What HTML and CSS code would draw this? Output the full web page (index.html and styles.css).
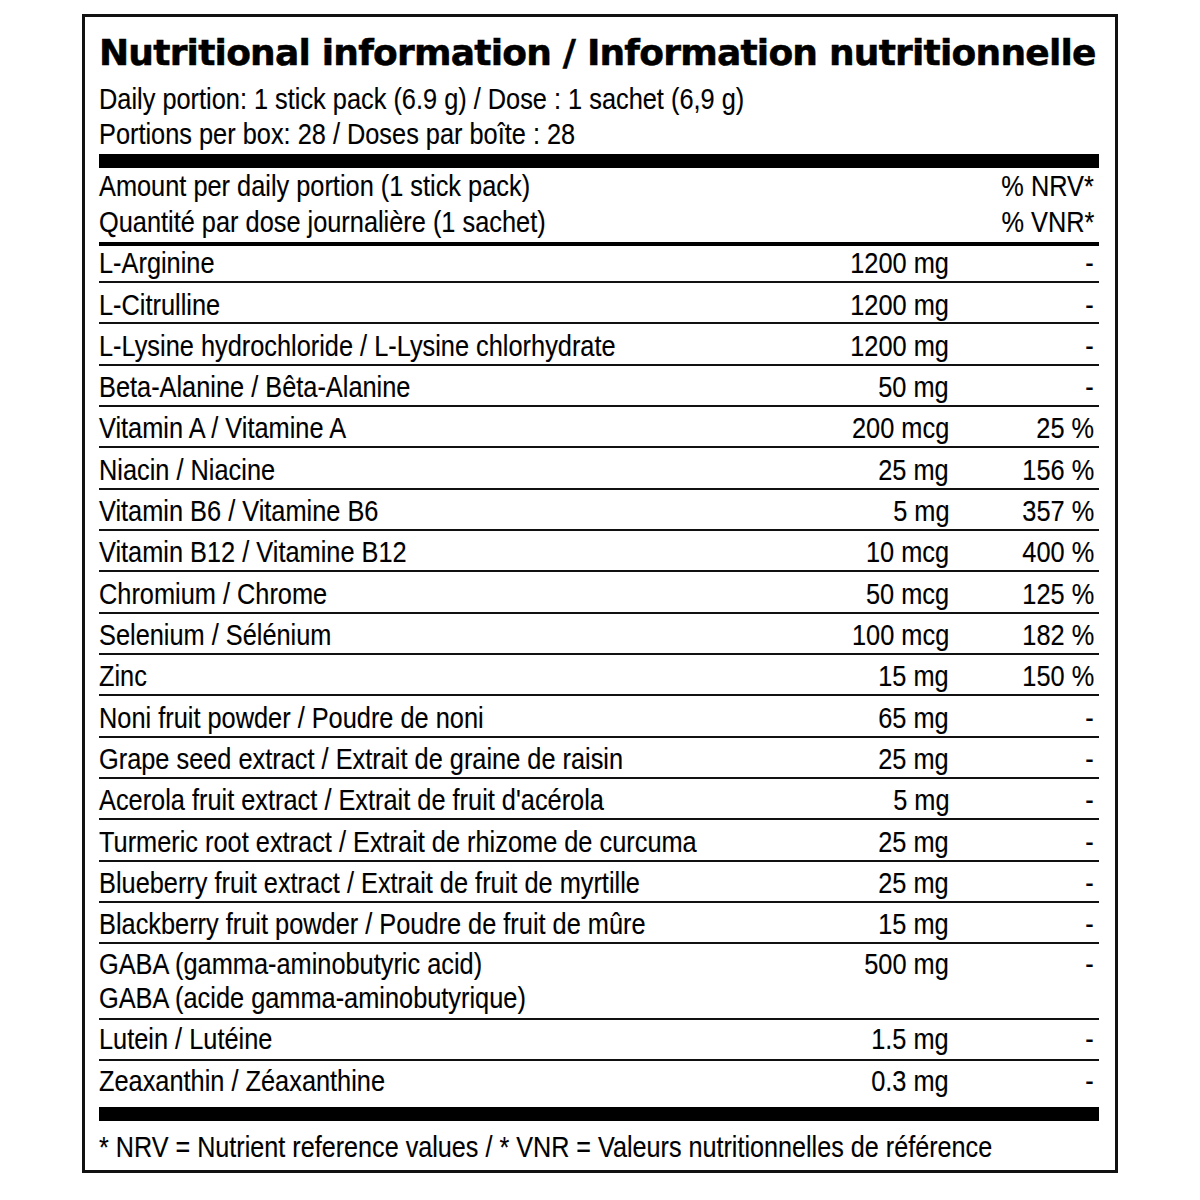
FILE: index.html
```html
<!DOCTYPE html>
<html lang="en">
<head>
<meta charset="utf-8">
<title>Nutritional information</title>
<link rel="stylesheet" href="styles.css">
</head>
<body>
<div class="label">
  <h1 class="title">Nutritional information / Information nutritionnelle</h1>
  <div class="serving">
    <div><span class="c">Daily portion: 1 stick pack (6.9 g) / Dose : 1 sachet (6,9 g)</span></div>
    <div><span class="c">Portions per box: 28 / Doses par boîte : 28</span></div>
  </div>
  <div class="bar"></div>
  <div class="head">
    <div class="head-line"><span class="c">Amount per daily portion (1 stick pack)</span><span class="c r">% NRV*</span></div>
    <div class="head-line"><span class="c">Quantité par dose journalière (1 sachet)</span><span class="c r">% VNR*</span></div>
  </div>
  <div class="rows">
    <div class="row first"><span class="name"><span class="c">L-Arginine</span></span><span class="amt"><span class="c r">1200 mg</span></span><span class="nrv"><span class="c r">-</span></span></div>
    <div class="row"><span class="name"><span class="c">L-Citrulline</span></span><span class="amt"><span class="c r">1200 mg</span></span><span class="nrv"><span class="c r">-</span></span></div>
    <div class="row"><span class="name"><span class="c">L-Lysine hydrochloride / L-Lysine chlorhydrate</span></span><span class="amt"><span class="c r">1200 mg</span></span><span class="nrv"><span class="c r">-</span></span></div>
    <div class="row"><span class="name"><span class="c">Beta-Alanine / Bêta-Alanine</span></span><span class="amt"><span class="c r">50 mg</span></span><span class="nrv"><span class="c r">-</span></span></div>
    <div class="row"><span class="name"><span class="c">Vitamin A / Vitamine A</span></span><span class="amt"><span class="c r">200 mcg</span></span><span class="nrv"><span class="c r">25 %</span></span></div>
    <div class="row"><span class="name"><span class="c">Niacin / Niacine</span></span><span class="amt"><span class="c r">25 mg</span></span><span class="nrv"><span class="c r">156 %</span></span></div>
    <div class="row"><span class="name"><span class="c">Vitamin B6 / Vitamine B6</span></span><span class="amt"><span class="c r">5 mg</span></span><span class="nrv"><span class="c r">357 %</span></span></div>
    <div class="row"><span class="name"><span class="c">Vitamin B12 / Vitamine B12</span></span><span class="amt"><span class="c r">10 mcg</span></span><span class="nrv"><span class="c r">400 %</span></span></div>
    <div class="row"><span class="name"><span class="c">Chromium / Chrome</span></span><span class="amt"><span class="c r">50 mcg</span></span><span class="nrv"><span class="c r">125 %</span></span></div>
    <div class="row"><span class="name"><span class="c">Selenium / Sélénium</span></span><span class="amt"><span class="c r">100 mcg</span></span><span class="nrv"><span class="c r">182 %</span></span></div>
    <div class="row"><span class="name"><span class="c">Zinc</span></span><span class="amt"><span class="c r">15 mg</span></span><span class="nrv"><span class="c r">150 %</span></span></div>
    <div class="row"><span class="name"><span class="c">Noni fruit powder / Poudre de noni</span></span><span class="amt"><span class="c r">65 mg</span></span><span class="nrv"><span class="c r">-</span></span></div>
    <div class="row"><span class="name"><span class="c">Grape seed extract / Extrait de graine de raisin</span></span><span class="amt"><span class="c r">25 mg</span></span><span class="nrv"><span class="c r">-</span></span></div>
    <div class="row"><span class="name"><span class="c">Acerola fruit extract / Extrait de fruit d'acérola</span></span><span class="amt"><span class="c r">5 mg</span></span><span class="nrv"><span class="c r">-</span></span></div>
    <div class="row"><span class="name"><span class="c">Turmeric root extract / Extrait de rhizome de curcuma</span></span><span class="amt"><span class="c r">25 mg</span></span><span class="nrv"><span class="c r">-</span></span></div>
    <div class="row"><span class="name"><span class="c">Blueberry fruit extract / Extrait de fruit de myrtille</span></span><span class="amt"><span class="c r">25 mg</span></span><span class="nrv"><span class="c r">-</span></span></div>
    <div class="row"><span class="name"><span class="c">Blackberry fruit powder / Poudre de fruit de mûre</span></span><span class="amt"><span class="c r">15 mg</span></span><span class="nrv"><span class="c r">-</span></span></div>
    <div class="row gaba"><span class="name"><span class="c">GABA (gamma-aminobutyric acid)<br>GABA (acide gamma-aminobutyrique)</span></span><span class="amt"><span class="c r">500 mg</span></span><span class="nrv"><span class="c r">-</span></span></div>
    <div class="row lutein"><span class="name"><span class="c">Lutein / Lutéine</span></span><span class="amt"><span class="c r">1.5 mg</span></span><span class="nrv"><span class="c r">-</span></span></div>
    <div class="row last"><span class="name"><span class="c">Zeaxanthin / Zéaxanthine</span></span><span class="amt"><span class="c r">0.3 mg</span></span><span class="nrv"><span class="c r">-</span></span></div>
  </div>
  <div class="bar"></div>
  <div class="foot"><span class="c">* NRV = Nutrient reference values / * VNR = Valeurs nutritionnelles de référence</span></div>
</div>
</body>
</html>
```

FILE: styles.css
```css
* { box-sizing: border-box; }
html, body { margin: 0; padding: 0; background: #fff; }
body {
  color: #000;
  font-family: "Liberation Sans", Arial, sans-serif;
  font-size: 29px;
}
.c {
  display: inline-block;
  white-space: nowrap;
  transform: scaleX(0.874);
  transform-origin: left center;
  -webkit-text-stroke: 0.15px #000;
}
.c.r { transform-origin: right center; }
.foot .c { transform: scaleX(0.868); }
.label {
  margin: 14px 0 0 82px;
  width: 1036px;
  border: 3px solid #111;
  padding: 14px 16px 6px 14px;
}
.title {
  margin: 0;
  font-family: "DejaVu Sans", "Liberation Sans", sans-serif;
  font-weight: bold;
  font-size: 36px;
  line-height: 44px;
  letter-spacing: -0.78px;
  white-space: nowrap;
  -webkit-text-stroke: 0.5px #000;
}
.serving {
  margin-top: 7px;
  line-height: 35px;
}
.bar {
  height: 14px;
  background: #000;
  margin-top: 2px;
}
.head {
  line-height: 36px;
  padding: 0 5px 2px 0;
  border-bottom: 4px solid #000;
}
.head-line {
  display: flex;
  justify-content: space-between;
}
.row {
  display: grid;
  grid-template-columns: 1fr 150px 145px;
  padding: 5.5px 5px 0 0;
  height: 41.33px;
  line-height: 33px;
  border-bottom: 2px solid #111;
}
.row .amt, .row .nrv { text-align: right; }
.row.first { height: 37px; padding-top: 1.3px; }
.row.gaba { height: 76px; padding-top: 4px; line-height: 33.3px; }
.row.lutein { height: 41px; padding-top: 2.5px; }
.row.last { height: 45.7px; padding-top: 3.5px; border-bottom: 0; }
.rows + .bar { margin-top: 0; }
.foot {
  margin-top: 10.5px;
  line-height: 33px;
}
```
